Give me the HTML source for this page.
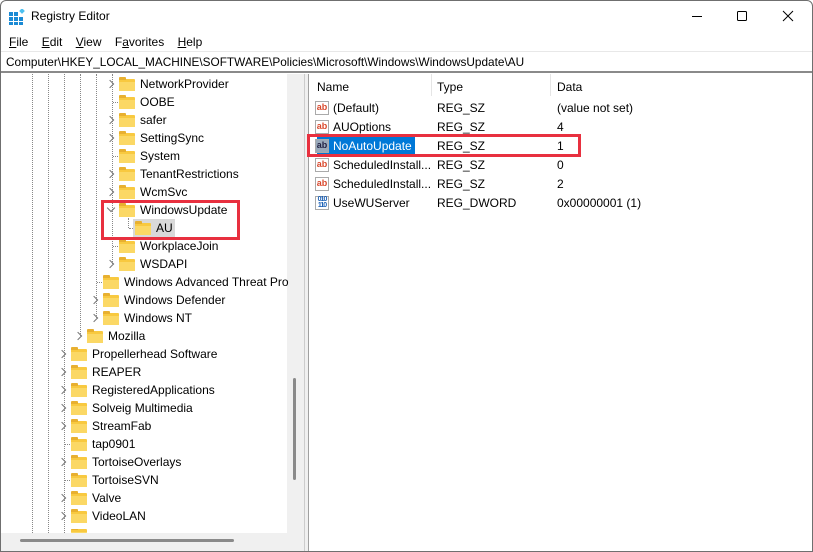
<!DOCTYPE html>
<html><head><meta charset="utf-8"><style>
*{margin:0;padding:0;box-sizing:border-box}
body{width:813px;height:552px;background:#fff;font-family:"Segoe UI","Liberation Sans",sans-serif;font-size:12px;color:#000;position:relative;overflow:hidden}
.win{position:absolute;left:0;top:0;width:813px;height:552px;border:1px solid #6f6f6f;border-radius:6px 6px 0 0;background:#fff}
.a{position:absolute;white-space:nowrap}
div.a:not([style*="border"]):not([style*="background"]){margin-top:1px}
.fold{position:absolute;width:16px;height:12px;background:#f8c940;border-radius:1px}
.fold:before{content:"";position:absolute;left:0;top:-2px;width:7px;height:3px;background:#e8b030;border-radius:1px 1px 0 0}
.fold:after{content:"";position:absolute;left:0;top:3px;width:16px;height:9px;background:#fbd865}
.chev{position:absolute;width:6px;height:6px;border-right:1.3px solid #777;border-bottom:1.3px solid #777;transform:rotate(-45deg)}
.vl{position:absolute;border-left:1px dotted #888;width:0}
.hl{position:absolute;border-top:1px dotted #888;height:0}
.ab{position:absolute;width:14px;height:14px;border:1px solid #aaa;background:#fff;font-size:9px;font-weight:bold;color:#d9472b;line-height:11px;text-align:center;font-family:"Liberation Sans",sans-serif}
</style></head><body>
<div class="win"></div>
<svg class="a" style="left:9px;top:9px" width="16" height="16"><rect x="0" y="3" width="4" height="4" fill="#1a8ad4"/><rect x="5" y="3" width="4" height="4" fill="#1a8ad4"/><rect x="0" y="8" width="4" height="4" fill="#1a8ad4"/><rect x="5" y="8" width="4" height="4" fill="#1a8ad4"/><rect x="10" y="8" width="4" height="4" fill="#1a8ad4"/><rect x="0" y="13" width="4" height="3" fill="#1a8ad4"/><rect x="5" y="13" width="4" height="3" fill="#1a8ad4"/><rect x="10" y="13" width="4" height="3" fill="#1a8ad4"/><rect x="11" y="0" width="4" height="4" fill="#4cc0f0" transform="rotate(45 13 2)"/></svg>
<div class="a" style="left:31px;top:8px;font-size:12px">Registry Editor</div>
<svg class="a" style="left:690px;top:10px" width="110" height="14"><line x1="2" y1="6.5" x2="12" y2="6.5" stroke="#000"/><rect x="47.5" y="1.5" width="9" height="9" fill="none" stroke="#000" rx="1"/><path d="M93 1L103 11M103 1L93 11" stroke="#000"/></svg>
<div class="a" style="left:9px;top:34px;font-size:12px"><u>F</u>ile&nbsp;&nbsp;&nbsp; <u>E</u>dit&nbsp;&nbsp;&nbsp; <u>V</u>iew&nbsp;&nbsp;&nbsp; F<u>a</u>vorites&nbsp;&nbsp;&nbsp; <u>H</u>elp</div>
<div class="a" style="left:1px;top:51px;width:811px;height:22px;border-top:1px solid #e8e8e8;border-bottom:2px solid #8a8a8a;background:#fff"></div>
<div class="a" style="left:6px;top:54px;font-size:11.8px">Computer\HKEY_LOCAL_MACHINE\SOFTWARE\Policies\Microsoft\Windows\WindowsUpdate\AU</div>
<div class="a" style="left:287px;top:74px;width:17px;height:459px;background:#f0f0f0"></div>
<div class="a" style="left:293px;top:378px;width:3px;height:102px;background:#8a8a8a;border-radius:2px"></div>
<div class="a" style="left:1px;top:533px;width:303px;height:18px;background:#f0f0f0"></div>
<div class="a" style="left:20px;top:539px;width:214px;height:3px;background:#8a8a8a;border-radius:2px"></div>
<div class="a" style="left:304px;top:74px;width:5px;height:477px;background:#f0f0f0;border-left:1px solid #ccc;border-right:1px solid #a0a0a0"></div>
<div class="vl" style="left:32px;top:74px;height:459px"></div>
<div class="vl" style="left:48px;top:74px;height:459px"></div>
<div class="vl" style="left:64px;top:74px;height:459px"></div>
<div class="vl" style="left:80px;top:74px;height:262px"></div>
<div class="vl" style="left:96px;top:74px;height:244px"></div>
<div class="vl" style="left:112px;top:74px;height:190px"></div>
<div class="vl" style="left:128px;top:218px;height:10px"></div>
<div class="hl" style="left:113px;top:102px;width:5px"></div>
<div class="hl" style="left:113px;top:156px;width:5px"></div>
<div class="hl" style="left:113px;top:246px;width:5px"></div>
<div class="hl" style="left:129px;top:228px;width:6px"></div>
<div class="hl" style="left:97px;top:282px;width:5px"></div>
<div class="hl" style="left:65px;top:444px;width:5px"></div>
<div class="hl" style="left:65px;top:480px;width:5px"></div>
<div class="a" style="left:133px;top:219px;width:42px;height:18px;background:#d9d9d9"></div>
<div class="chev" style="left:107px;top:81px"></div><div class="fold" style="left:119px;top:79px"></div><div class="a" style="left:140px;top:76px">NetworkProvider</div>
<div class="fold" style="left:119px;top:97px"></div><div class="a" style="left:140px;top:94px">OOBE</div>
<div class="chev" style="left:107px;top:117px"></div><div class="fold" style="left:119px;top:115px"></div><div class="a" style="left:140px;top:112px">safer</div>
<div class="chev" style="left:107px;top:135px"></div><div class="fold" style="left:119px;top:133px"></div><div class="a" style="left:140px;top:130px">SettingSync</div>
<div class="fold" style="left:119px;top:151px"></div><div class="a" style="left:140px;top:148px">System</div>
<div class="chev" style="left:107px;top:171px"></div><div class="fold" style="left:119px;top:169px"></div><div class="a" style="left:140px;top:166px">TenantRestrictions</div>
<div class="chev" style="left:107px;top:189px"></div><div class="fold" style="left:119px;top:187px"></div><div class="a" style="left:140px;top:184px">WcmSvc</div>
<div class="chev" style="left:108px;top:205px;transform:rotate(45deg)"></div><div class="fold" style="left:119px;top:205px"></div><div class="a" style="left:140px;top:202px">WindowsUpdate</div>
<div class="fold" style="left:135px;top:223px"></div><div class="a" style="left:156px;top:220px">AU</div>
<div class="fold" style="left:119px;top:241px"></div><div class="a" style="left:140px;top:238px">WorkplaceJoin</div>
<div class="chev" style="left:107px;top:261px"></div><div class="fold" style="left:119px;top:259px"></div><div class="a" style="left:140px;top:256px">WSDAPI</div>
<div class="fold" style="left:103px;top:277px"></div><div class="a" style="left:124px;top:274px">Windows Advanced Threat Pro</div>
<div class="chev" style="left:91px;top:297px"></div><div class="fold" style="left:103px;top:295px"></div><div class="a" style="left:124px;top:292px">Windows Defender</div>
<div class="chev" style="left:91px;top:315px"></div><div class="fold" style="left:103px;top:313px"></div><div class="a" style="left:124px;top:310px">Windows NT</div>
<div class="chev" style="left:75px;top:333px"></div><div class="fold" style="left:87px;top:331px"></div><div class="a" style="left:108px;top:328px">Mozilla</div>
<div class="chev" style="left:59px;top:351px"></div><div class="fold" style="left:71px;top:349px"></div><div class="a" style="left:92px;top:346px">Propellerhead Software</div>
<div class="chev" style="left:59px;top:369px"></div><div class="fold" style="left:71px;top:367px"></div><div class="a" style="left:92px;top:364px">REAPER</div>
<div class="chev" style="left:59px;top:387px"></div><div class="fold" style="left:71px;top:385px"></div><div class="a" style="left:92px;top:382px">RegisteredApplications</div>
<div class="chev" style="left:59px;top:405px"></div><div class="fold" style="left:71px;top:403px"></div><div class="a" style="left:92px;top:400px">Solveig Multimedia</div>
<div class="chev" style="left:59px;top:423px"></div><div class="fold" style="left:71px;top:421px"></div><div class="a" style="left:92px;top:418px">StreamFab</div>
<div class="fold" style="left:71px;top:439px"></div><div class="a" style="left:92px;top:436px">tap0901</div>
<div class="chev" style="left:59px;top:459px"></div><div class="fold" style="left:71px;top:457px"></div><div class="a" style="left:92px;top:454px">TortoiseOverlays</div>
<div class="fold" style="left:71px;top:475px"></div><div class="a" style="left:92px;top:472px">TortoiseSVN</div>
<div class="chev" style="left:59px;top:495px"></div><div class="fold" style="left:71px;top:493px"></div><div class="a" style="left:92px;top:490px">Valve</div>
<div class="chev" style="left:59px;top:513px"></div><div class="fold" style="left:71px;top:511px"></div><div class="a" style="left:92px;top:508px">VideoLAN</div>
<div class="fold" style="left:71px;top:529px;height:4px;overflow:hidden"></div>
<div class="a" style="left:101px;top:200px;width:139px;height:40px;border:3px solid #e8303f"></div>
<div class="a" style="left:431px;top:74px;width:1px;height:22px;background:#e5e5e5"></div>
<div class="a" style="left:550px;top:74px;width:1px;height:22px;background:#e5e5e5"></div>
<div class="a" style="left:317px;top:79px">Name</div>
<div class="a" style="left:437px;top:79px">Type</div>
<div class="a" style="left:557px;top:79px">Data</div>
<div class="a" style="left:317px;top:136px;width:98px;height:19px;background:#0078d7"></div>
<div class="ab" style="left:315px;top:101px">ab</div><div class="a" style="left:333px;top:100px">(Default)</div><div class="a" style="left:437px;top:100px">REG_SZ</div><div class="a" style="left:557px;top:100px">(value not set)</div>
<div class="ab" style="left:315px;top:120px">ab</div><div class="a" style="left:333px;top:119px">AUOptions</div><div class="a" style="left:437px;top:119px">REG_SZ</div><div class="a" style="left:557px;top:119px">4</div>
<div class="ab" style="left:315px;top:139px;background:#9ab;color:#224">ab</div><div class="a" style="left:333px;top:138px;color:#fff">NoAutoUpdate</div><div class="a" style="left:437px;top:138px">REG_SZ</div><div class="a" style="left:557px;top:138px">1</div>
<div class="ab" style="left:315px;top:158px">ab</div><div class="a" style="left:333px;top:157px">ScheduledInstall...</div><div class="a" style="left:437px;top:157px">REG_SZ</div><div class="a" style="left:557px;top:157px">0</div>
<div class="ab" style="left:315px;top:177px">ab</div><div class="a" style="left:333px;top:176px">ScheduledInstall...</div><div class="a" style="left:437px;top:176px">REG_SZ</div><div class="a" style="left:557px;top:176px">2</div>
<div class="ab" style="left:315px;top:196px;color:#1a5fb4;font-size:7px;line-height:6px;letter-spacing:-1px">010<br>110</div><div class="a" style="left:333px;top:195px">UseWUServer</div><div class="a" style="left:437px;top:195px">REG_DWORD</div><div class="a" style="left:557px;top:195px">0x00000001 (1)</div>
<div class="a" style="left:307px;top:134px;width:274px;height:23px;border:3px solid #e8303f"></div>
</body></html>
